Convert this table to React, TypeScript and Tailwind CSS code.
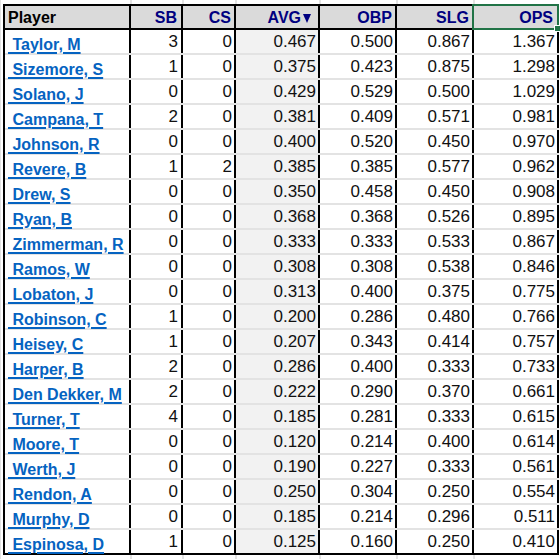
import React from "react";

const rows: [string, number, number, string, string, string, string][] = [
  ["Taylor, M", 3, 0, "0.467", "0.500", "0.867", "1.367"],
  ["Sizemore, S", 1, 0, "0.375", "0.423", "0.875", "1.298"],
  ["Solano, J", 0, 0, "0.429", "0.529", "0.500", "1.029"],
  ["Campana, T", 2, 0, "0.381", "0.409", "0.571", "0.981"],
  ["Johnson, R", 0, 0, "0.400", "0.520", "0.450", "0.970"],
  ["Revere, B", 1, 2, "0.385", "0.385", "0.577", "0.962"],
  ["Drew, S", 0, 0, "0.350", "0.458", "0.450", "0.908"],
  ["Ryan, B", 0, 0, "0.368", "0.368", "0.526", "0.895"],
  ["Zimmerman, R", 0, 0, "0.333", "0.333", "0.533", "0.867"],
  ["Ramos, W", 0, 0, "0.308", "0.308", "0.538", "0.846"],
  ["Lobaton, J", 0, 0, "0.313", "0.400", "0.375", "0.775"],
  ["Robinson, C", 1, 0, "0.200", "0.286", "0.480", "0.766"],
  ["Heisey, C", 1, 0, "0.207", "0.343", "0.414", "0.757"],
  ["Harper, B", 2, 0, "0.286", "0.400", "0.333", "0.733"],
  ["Den Dekker, M", 2, 0, "0.222", "0.290", "0.370", "0.661"],
  ["Turner, T", 4, 0, "0.185", "0.281", "0.333", "0.615"],
  ["Moore, T", 0, 0, "0.120", "0.214", "0.400", "0.614"],
  ["Werth, J", 0, 0, "0.190", "0.227", "0.333", "0.561"],
  ["Rendon, A", 0, 0, "0.250", "0.304", "0.250", "0.554"],
  ["Murphy, D", 0, 0, "0.185", "0.214", "0.296", "0.511"],
  ["Espinosa, D", 1, 0, "0.125", "0.160", "0.250", "0.410"],
];

const font = { fontFamily: '"Liberation Sans", Arial, sans-serif' };

function GridStrip() {
  return (
    <div className="flex h-[4px]">
      <div className="w-[5px] shrink-0" />
      <div className="w-[126px] shrink-0 border-r-2 border-[#e3e3e3]" />
      <div className="w-[52px] shrink-0 border-r-2 border-[#e3e3e3]" />
      <div className="w-[53px] shrink-0 border-r-2 border-[#e3e3e3]" />
      <div className="w-[84px] shrink-0 border-r-2 border-[#e3e3e3]" />
      <div className="w-[77px] shrink-0 border-r-2 border-[#e3e3e3]" />
      <div className="w-[77px] shrink-0 border-r-2 border-[#e3e3e3]" />
      <div className="w-[85px] shrink-0" />
    </div>
  );
}

export default function App() {
  return (
    <div className="w-[560px] h-[559px] bg-white overflow-hidden border-l border-[#e3e3e3]" style={font}>
      <GridStrip />
      <div className="ml-[2px] w-[556px] border-l-2 border-t-2 border-b-2 border-black">
        {/* header */}
        <div className="flex h-[24px] border-b-2 border-black bg-[#dadada] text-[16px] font-bold text-[#000080]">
          <div className="w-[126px] shrink-0 border-r-2 border-black pl-[3px] pt-[2px] flex items-center text-black">Player</div>
          <div className="w-[52px] shrink-0 border-r-2 border-black pr-[4px] pt-[2px] flex items-center justify-end">SB</div>
          <div className="w-[53px] shrink-0 border-r-2 border-black pr-[3px] pt-[2px] flex items-center justify-end">CS</div>
          <div className="w-[84px] shrink-0 border-r-2 border-black pr-[7px] pt-[2px] flex items-center justify-end">
            AVG
            <svg width="8" height="9" viewBox="0 0 8 9" className="ml-[2px] mt-[1px]">
              <polygon points="0,0 8,0 4,9" fill="#000080" />
            </svg>
          </div>
          <div className="w-[77px] shrink-0 border-r-2 border-black pr-[3px] pt-[2px] flex items-center justify-end">OBP</div>
          <div className="w-[77px] shrink-0 border-r-2 border-black pr-[3px] pt-[2px] flex items-center justify-end">SLG</div>
          <div className="relative w-[85px] shrink-0 border-r-2 border-black pr-[4px] pt-[2px] flex items-center justify-end">
            OPS
            <div className="absolute top-[-2px] left-[-2px] right-[-2px] bottom-[-2px] border-2 border-[#217346]" />
            <div className="absolute right-[-4px] bottom-[-4px] w-[5px] h-[5px] bg-[#217346] border border-white box-content" />
          </div>
        </div>
        {rows.map((r, i) => (
          <div
            key={r[0]}
            className={
              "flex text-[17px] text-[#111111] " +
              (i === rows.length - 1 ? "h-[23px]" : "h-[25px] border-b-2 border-[#e3e3e3]")
            }
          >
            <div className="w-[126px] shrink-0 border-r-2 border-black pl-[3px] pt-[6px] flex items-center">
              <span className="text-[16px] font-bold text-[#0563c1] underline underline-offset-[2px] decoration-[1.5px] whitespace-pre">
                {" " + r[0]}
              </span>
            </div>
            <div className="w-[52px] shrink-0 border-r-2 border-black pr-[3px] pt-[1px] flex items-center justify-end">{r[1]}</div>
            <div className="w-[53px] shrink-0 border-r-2 border-black pr-[2px] pt-[1px] flex items-center justify-end">{r[2]}</div>
            <div className="w-[84px] shrink-0 border-r-2 border-black bg-[#f2f2f2] pr-[2px] pt-[1px] flex items-center justify-end">{r[3]}</div>
            <div className="w-[77px] shrink-0 border-r-2 border-black pr-[2px] pt-[1px] flex items-center justify-end">{r[4]}</div>
            <div className="w-[77px] shrink-0 border-r-2 border-black pr-[2px] pt-[1px] flex items-center justify-end">{r[5]}</div>
            <div className="w-[85px] shrink-0 border-r-2 border-black pr-[2px] pt-[1px] flex items-center justify-end">{r[6]}</div>
          </div>
        ))}
      </div>
      <GridStrip />
    </div>
  );
}
